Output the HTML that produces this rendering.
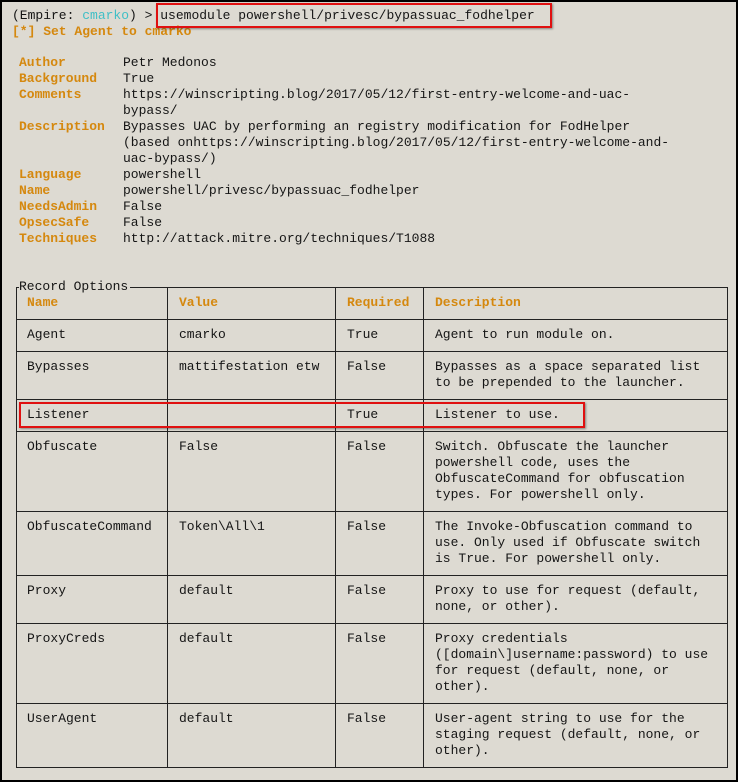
<!DOCTYPE html>
<html><head><meta charset="utf-8"><style>
html,body{margin:0;padding:0}
body{width:738px;height:782px;position:relative;background:#000;overflow:hidden;font-family:"Liberation Mono","DejaVu Sans Mono",monospace;font-size:13px;line-height:16px;color:#151515}
#f{position:absolute;left:2px;top:2px;width:734px;height:778px;background:#dddad2}
.t{position:absolute;white-space:pre;margin:1px 0 0 0}
.o{color:#d5880e;font-weight:bold}
.c{color:#3fbfc6}
.h{position:absolute;height:1px;background:#222}
.v{position:absolute;width:1px;background:#222}
.r{position:absolute;border:2px solid #e01010;box-shadow:1px 1px 2px rgba(0,0,0,.4)}
</style></head><body><div id="f"></div>
<div class="t" style="left:12px;top:7px">(Empire: <span class="c">cmarko</span>) &gt; usemodule powershell/privesc/bypassuac_fodhelper</div>
<div class="t o" style="left:12px;top:23px">[*] Set Agent to cmarko</div>
<div class="t o" style="left:19px;top:54px">Author
Background
Comments

Description


Language
Name
NeedsAdmin
OpsecSafe
Techniques</div>
<div class="t" style="left:123px;top:54px">Petr Medonos
True
https://winscripting.blog/2017/05/12/first-entry-welcome-and-uac-
bypass/
Bypasses UAC by performing an registry modification for FodHelper
(based onhttps://winscripting.blog/2017/05/12/first-entry-welcome-and-
uac-bypass/)
powershell
powershell/privesc/bypassuac_fodhelper
False
False
http://attack.mitre.org/techniques/T1088</div>
<div class="r" style="left:156px;top:3px;width:392px;height:21px"></div>

<div class="t" style="left:19px;top:278px">Record Options</div>
<div class="h" style="left:16px;top:287px;width:3px"></div>
<div class="h" style="left:130px;top:287px;width:598px"></div>
<div class="v" style="left:16px;top:287px;height:481px"></div>
<div class="v" style="left:167px;top:287px;height:481px"></div>
<div class="v" style="left:335px;top:287px;height:481px"></div>
<div class="v" style="left:423px;top:287px;height:481px"></div>
<div class="v" style="left:727px;top:287px;height:481px"></div>
<div class="h" style="left:16px;top:319px;width:712px"></div>
<div class="h" style="left:16px;top:351px;width:712px"></div>
<div class="h" style="left:16px;top:399px;width:712px"></div>
<div class="h" style="left:16px;top:431px;width:712px"></div>
<div class="h" style="left:16px;top:511px;width:712px"></div>
<div class="h" style="left:16px;top:575px;width:712px"></div>
<div class="h" style="left:16px;top:623px;width:712px"></div>
<div class="h" style="left:16px;top:703px;width:712px"></div>
<div class="h" style="left:16px;top:767px;width:712px"></div>

<div class="t o" style="left:27px;top:294px">Name</div>
<div class="t o" style="left:179px;top:294px">Value</div>
<div class="t o" style="left:347px;top:294px">Required</div>
<div class="t o" style="left:435px;top:294px">Description</div>

<div class="t" style="left:27px;top:326px">Agent</div><div class="t" style="left:179px;top:326px">cmarko</div><div class="t" style="left:347px;top:326px">True</div><div class="t" style="left:435px;top:326px">Agent to run module on.</div>
<div class="t" style="left:27px;top:358px">Bypasses</div><div class="t" style="left:179px;top:358px">mattifestation etw</div><div class="t" style="left:347px;top:358px">False</div><div class="t" style="left:435px;top:358px">Bypasses as a space separated list
to be prepended to the launcher.</div>
<div class="t" style="left:27px;top:406px">Listener</div><div class="t" style="left:347px;top:406px">True</div><div class="t" style="left:435px;top:406px">Listener to use.</div>
<div class="t" style="left:27px;top:438px">Obfuscate</div><div class="t" style="left:179px;top:438px">False</div><div class="t" style="left:347px;top:438px">False</div><div class="t" style="left:435px;top:438px">Switch. Obfuscate the launcher
powershell code, uses the
ObfuscateCommand for obfuscation
types. For powershell only.</div>
<div class="t" style="left:27px;top:518px">ObfuscateCommand</div><div class="t" style="left:179px;top:518px">Token\All\1</div><div class="t" style="left:347px;top:518px">False</div><div class="t" style="left:435px;top:518px">The Invoke-Obfuscation command to
use. Only used if Obfuscate switch
is True. For powershell only.</div>
<div class="t" style="left:27px;top:582px">Proxy</div><div class="t" style="left:179px;top:582px">default</div><div class="t" style="left:347px;top:582px">False</div><div class="t" style="left:435px;top:582px">Proxy to use for request (default,
none, or other).</div>
<div class="t" style="left:27px;top:630px">ProxyCreds</div><div class="t" style="left:179px;top:630px">default</div><div class="t" style="left:347px;top:630px">False</div><div class="t" style="left:435px;top:630px">Proxy credentials
([domain\]username:password) to use
for request (default, none, or
other).</div>
<div class="t" style="left:27px;top:710px">UserAgent</div><div class="t" style="left:179px;top:710px">default</div><div class="t" style="left:347px;top:710px">False</div><div class="t" style="left:435px;top:710px">User-agent string to use for the
staging request (default, none, or
other).</div>
<div class="r" style="left:19px;top:402px;width:562px;height:22px"></div>
</body></html>
